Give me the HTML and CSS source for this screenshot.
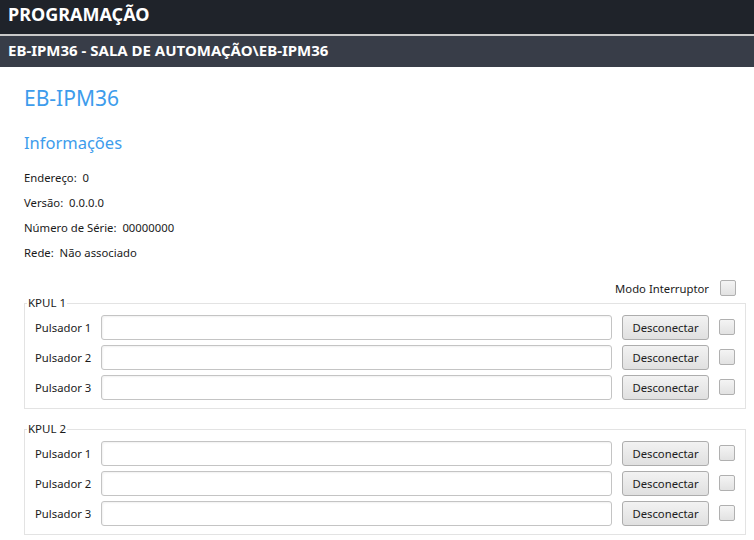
FILE: index.html
```html
<!DOCTYPE html>
<html lang="pt">
<head>
<meta charset="utf-8">
<link rel="stylesheet" href="styles.css">
</head>
<body>
<header class="topbar">PROGRAMAÇÃO</header>
<div class="subbar">EB-IPM36 - SALA DE AUTOMAÇÃO\EB-IPM36</div>
<main class="content">
  <h1 class="title">EB-IPM36</h1>
  <h2 class="section">Informações</h2>
  <ul class="info">
    <li>Endereço:&nbsp; 0</li>
    <li>Versão:&nbsp; 0.0.0.0</li>
    <li>Número de Série:&nbsp; 00000000</li>
    <li>Rede:&nbsp; Não associado</li>
  </ul>
  <div class="mode">
    <span>Modo Interruptor</span>
    <span class="check"></span>
  </div>
  <fieldset class="group">
    <legend>KPUL 1</legend>
    <div class="row"><span class="label">Pulsador 1</span><span class="input"></span><span class="btn">Desconectar</span><span class="check"></span></div>
    <div class="row"><span class="label">Pulsador 2</span><span class="input"></span><span class="btn">Desconectar</span><span class="check"></span></div>
    <div class="row"><span class="label">Pulsador 3</span><span class="input"></span><span class="btn">Desconectar</span><span class="check"></span></div>
  </fieldset>
  <fieldset class="group">
    <legend>KPUL 2</legend>
    <div class="row"><span class="label">Pulsador 1</span><span class="input"></span><span class="btn">Desconectar</span><span class="check"></span></div>
    <div class="row"><span class="label">Pulsador 2</span><span class="input"></span><span class="btn">Desconectar</span><span class="check"></span></div>
    <div class="row"><span class="label">Pulsador 3</span><span class="input"></span><span class="btn">Desconectar</span><span class="check"></span></div>
  </fieldset>
</main>
</body>
</html>
```
FILE: styles.css
```css
* { box-sizing: border-box; }
html, body { margin: 0; padding: 0; background: #ffffff; }
body {
  font-family: "Noto Sans", "Open Sans", sans-serif;
  font-size: 11.3px;
  color: #1a1a1a;
  width: 754px;
  height: 540px;
  overflow: hidden;
}
.topbar {
  height: 36px;
  background: #1f232a;
  color: #ffffff;
  font-weight: bold;
  font-size: 18px;
  line-height: 28px;
  padding-left: 8px;
  border-bottom: 2px solid #c9c9c9;
}
.subbar {
  height: 31px;
  background: #383d48;
  color: #ffffff;
  font-weight: bold;
  font-size: 15px;
  line-height: 29px;
  padding-left: 8px;
}
.content {
  padding: 0 8px 0 24px;
}
.title {
  margin: 0 0 17px 0;
  padding-top: 16px;
  font-size: 21px;
  font-weight: normal;
  color: #3d9cec;
  line-height: 30px;
  height: 46px;
}
.section {
  margin: 0 0 9px 0;
  font-size: 16.5px;
  font-weight: normal;
  color: #3d9cec;
  line-height: 26px;
  height: 26px;
}
.info {
  list-style: none;
  margin: 0;
  padding: 0;
}
.info li {
  height: 25px;
  line-height: 25px;
}
.mode {
  display: flex;
  justify-content: flex-end;
  align-items: center;
  gap: 11px;
  padding-right: 10px;
  margin-top: 15px;
  height: 16px;
}
.check {
  display: inline-block;
  width: 16px;
  height: 16px;
  border: 1px solid #b0b0b0;
  border-radius: 2px;
  background: linear-gradient(#f4f4f4, #e2e2e2);
  flex: none;
}
.group {
  margin: 0 0 13px 0;
  border: 1px solid #e3e3e3;
  padding: 2px 10px 6px 10px;
  min-width: 0;
}
.group legend {
  padding: 0 1px;
  margin-left: -8px;
  line-height: 14px;
  font-size: 11.5px;
}
.row {
  display: flex;
  align-items: center;
  gap: 10px;
  height: 30px;
}
.label {
  width: 56px;
  flex: none;
  white-space: nowrap;
}
.input {
  flex: 1;
  height: 25px;
  border: 1px solid #c4c4c4;
  border-radius: 3px;
  background: #ffffff;
  box-shadow: inset 1px 1px 2px rgba(0,0,0,0.06);
}
.btn {
  flex: none;
  width: 87px;
  height: 25px;
  border: 1px solid #adadad;
  border-radius: 3px;
  background: linear-gradient(#f2f2f2, #e0e0e0);
  text-align: center;
  line-height: 23px;
  color: #202020;
}
```
